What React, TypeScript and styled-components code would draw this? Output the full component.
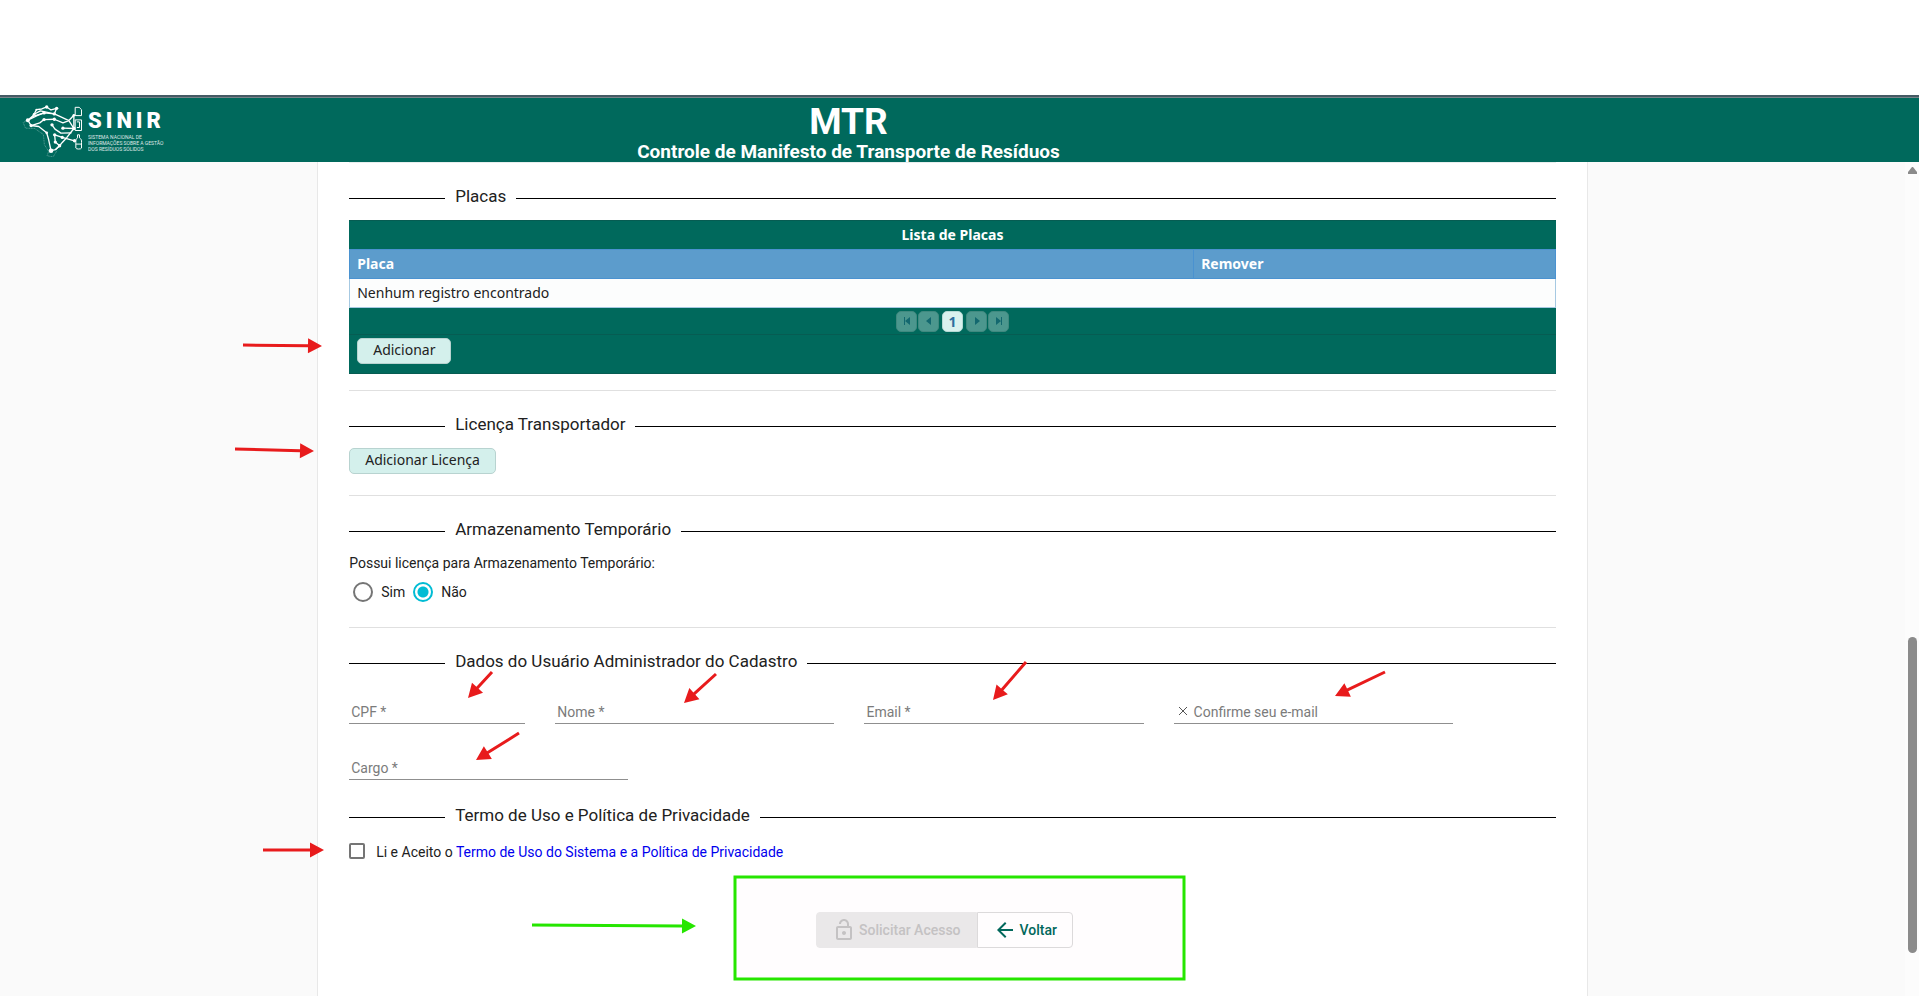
import React from 'react';
import styled, { createGlobalStyle } from 'styled-components';
import { MdArrowBack, MdOutlineLockOpen } from 'react-icons/md';

const GlobalStyle = createGlobalStyle`
  *, *::before, *::after { box-sizing: border-box; }
  body { margin: 0; background: #fff; color: #212121; font: 14px/20px Roboto, "Liberation Sans", sans-serif; }
  h1, h2, p { margin: 0; font-weight: 400; }
  button, input { font: inherit; color: inherit; }
`;

const Page = styled.div`
  position: relative;
  display: flex;
  flex-direction: column;
  min-height: 100vh;
  padding-top: 95px;
`;

const Header = styled.header`
  display: grid;
  grid-template-columns: 190px 1fr 412px;
  height: 67px;
  border-top: 2px solid #455a64;
  background: #00695c;
  box-shadow: inset 0 1px #78848a;
  color: #fff;
`;

const Brand = styled.a`
  display: flex;
  align-items: flex-start;
  gap: 5px;
  padding: 7px 0 0 22px;
  color: #fff;
  text-decoration: none;
`;

const BrandText = styled.span`
  display: flex;
  flex-direction: column;
  padding-top: 6px;
`;

const BrandName = styled.strong`
  margin-bottom: 2px;
  font: 900 22px/22px Roboto, sans-serif;
  letter-spacing: 4px;
`;

const BrandLine = styled.span`
  font: 5px/6px Roboto, sans-serif;
  white-space: nowrap;
  opacity: 0.85;
`;

const Titles = styled.div`
  padding-top: 5px;
  text-align: center;
  white-space: nowrap;
`;

const Title = styled.h1`
  font-size: 37px;
  font-weight: 700;
  line-height: 40px;
`;

const Subtitle = styled.p`
  font-size: 19px;
  font-weight: 700;
  line-height: 20px;
`;

const Body = styled.div`
  flex: 1;
  display: flex;
  background: #fafafa;
`;

const Main = styled.main`
  flex: 1;
  display: flex;
  justify-content: center;
`;

const Card = styled.form`
  width: 66.7%;
  padding: 0 31px;
  border: solid #e8e8e8;
  border-width: 0 1px;
  background: #fff;
`;

const Section = styled.section<{ $end?: number; $line?: boolean }>`
  padding-top: 21px;
  padding-bottom: ${(p) => p.$end ?? 0}px;
  border-bottom: ${(p) => (p.$line ? '1px solid #e0e0e0' : '0')};

  &:first-child { border-top: 1px solid #e8eeee; }
`;

const Heading = styled.h2`
  display: flex;
  align-items: center;
  gap: 10px;
  margin-bottom: 12px;
  font-size: 17px;
  line-height: 24px;
  white-space: nowrap;

  &::before, &::after {
    content: '';
    height: 1px;
    margin-top: 5px;
    background: #000;
  }
  &::before { width: 96px; }
  &::after { flex: 1; }
`;

const tableFont = '"Noto Sans", "Open Sans", sans-serif';

const Panel = styled.div`
  border: 1px solid #065c52;
  border-width: 1px 0;
  background: #00695c;
  font-family: ${tableFont};
`;

const Table = styled.table`
  width: 100%;
  table-layout: fixed;
  border-collapse: collapse;
`;

const Caption = styled.caption`
  height: 28px;
  color: #fff;
  font-weight: 700;
  line-height: 28px;
`;

const HeadCell = styled.th<{ $width: string }>`
  width: ${(p) => p.$width};
  height: 29px;
  padding: 0 7px;
  border: 1px solid #4a92d0;
  background: #5c9ccc;
  color: #fff;
  text-align: left;
`;

const Cell = styled.td`
  height: 29px;
  padding: 0 7px;
  border: 1px solid #a6c9e2;
  background: #fcfdfd;
`;

const Pager = styled.nav`
  display: flex;
  justify-content: center;
  align-items: center;
  gap: 1px;
  height: 26px;
`;

const PageButton = styled.button<{ $current?: boolean }>`
  display: grid;
  place-items: center;
  width: 21px;
  height: 21px;
  margin: 0 ${(p) => (p.$current ? 2 : 0)}px;
  padding: 0;
  border: 1px solid ${(p) => (p.$current ? '#b5d9d4' : '#40897f')};
  border-radius: 5px;
  background: ${(p) => (p.$current ? '#d8f1ee' : '#4c978e')};
  color: ${(p) => (p.$current ? '#2e6e9e' : '#13686f')};
  font-weight: 700;
`;

const PanelFooter = styled.div`
  height: 39px;
  padding: 3px 8px;
  border-top: 1px solid #065c52;
`;

const ActionButton = styled.button`
  display: block;
  height: 26px;
  padding: 0 15px 2px;
  border: 1px solid #b8d3d0;
  border-radius: 5px;
  background: #d4f0ec;
  color: #222;
  font-family: ${tableFont};
  line-height: 20px;
`;

const Radios = styled.div`
  display: flex;
  gap: 8px;
  padding: 9px 0 0 4px;
`;

const RadioLabel = styled.label`
  display: flex;
  align-items: center;
  gap: 8px;
`;

const Radio = styled.input`
  appearance: none;
  width: 20px;
  height: 20px;
  margin: 0;
  border: 2px solid #757575;
  border-radius: 50%;

  &:checked {
    border-color: #00bcd4;
    background: radial-gradient(circle, #00bcd4 5px, transparent 6px);
  }
`;

const Fields = styled.div<{ $columns: string }>`
  display: grid;
  grid-template-columns: ${(p) => p.$columns};
  gap: 30px;
  & + & { margin-top: 17px; }
`;

const FieldBox = styled.label`
  display: flex;
  align-items: center;
  gap: 6px;
  min-width: 0;
  height: 39px;
  padding: 15px 2px 0;
  border-bottom: 1px solid #8f8f8f;
  color: #7b7b7b;
  white-space: nowrap;
`;

const FieldInput = styled.input`
  flex: 1;
  width: 0;
  min-width: 0;
  padding: 0;
  border: 0;
  outline: 0;
  background: transparent;
`;

const Terms = styled.div`
  display: flex;
  align-items: center;
  gap: 11px;
  padding-top: 1px;

  label { padding-top: 2px; }
`;

const Checkbox = styled.input`
  appearance: none;
  width: 16px;
  height: 16px;
  margin: 0;
  border: 2px solid #757575;
  border-radius: 2px;
`;

const TermsLink = styled.a`
  color: #0000ee;
  text-decoration: none;
`;

const Actions = styled.div`
  display: flex;
  justify-content: center;
  padding: 50px 16px 49px 0;
`;

const FormButton = styled.button<{ $side: 'left' | 'right' }>`
  display: flex;
  align-items: center;
  gap: 3px;
  height: 36px;
  padding: 0 15px;
  border: 1px solid ${(p) => (p.$side === 'left' ? '#eaeaea' : '#dcdcdc')};
  border-radius: ${(p) => (p.$side === 'left' ? '4px 0 0 4px' : '0 4px 4px 0')};
  background: ${(p) => (p.$side === 'left' ? '#eaeaea' : '#fff')};
  color: ${(p) => (p.$side === 'left' ? '#c4c4c4' : '#00695c')};
  font-weight: 500;

  svg { width: 24px; height: 24px; }
`;

const ScrollTrack = styled.div`
  display: flex;
  flex-direction: column;
  align-items: center;
  width: 14px;
  padding: 5px 1px 0 2px;
  background: #fcfcfc;

  svg { width: 9px; height: 7px; }
`;

const ScrollSpace = styled.div<{ $grow: number }>`
  flex: ${(p) => p.$grow};
`;

const ScrollThumb = styled.div`
  flex: 316;
  width: 9px;
  border-radius: 5px;
  background: #8b8b8b;
`;

const Overlay = styled.svg`
  position: absolute;
  inset: 0;
  width: 100%;
  height: 100%;
  pointer-events: none;
`;

const nodes: [number, number, number][] = [
  [82, 105, 6], [92, 121, 5], [139, 65, 5], [108, 73, 3], [101, 87, 4], [169, 69, 5], [131, 83, 5],
  [162, 86, 5], [131, 103, 5], [162, 102, 5], [155, 119, 5], [139, 143, 4], [188, 129, 5],
  [221, 130, 5], [221, 90, 4], [186, 157, 5], [163, 149, 5], [223, 167, 5], [165, 171, 5],
  [178, 182, 5], [152, 197, 7],
];

const BrandMap = () => (
  <svg width="61" height="53" viewBox="65 56 183 160" fill="none" stroke="#fff" strokeWidth="4" strokeLinejoin="round" aria-hidden="true">
    <path d="M82 105 95 94 101 87 108 73 124 71 139 65 152 74 169 69 162 86 131 83 110 91 82 105 92 121 115 124 139 143 145 164 152 197 165 194 178 182 186 172 200 157 221 130 221 115 221 90" />
    <path d="M95 94 131 83M131 103 162 102 188 113 206 106 221 130 188 129M155 119 164 132 182 144 214 143M101 87 120 77 162 86 182 95 206 106 221 90M92 121 118 113 131 103M163 149 186 157 223 167M163 149 165 171 178 182 165 194" />
    <path d="m82 105-14 7 7 17 28 1 26 18 3 31 13 20-5 13 18 4 12-19" strokeWidth="2" strokeDasharray="3 2" opacity=".5" />
    <g strokeWidth="3">
      <path d="M225 66h12l7 7v18h-19zM225 104h19v32h-19zM230 110h8v17h-8" />
      <path d="M232 149h6v9c5 4 7 7 6 14v17c0 4-17 4-17 0v-17c-1-7 1-10 5-14zM227 177h16" />
    </g>
    {nodes.map(([x, y, r]) => (
      <circle key={`${x}-${y}`} cx={x} cy={y} r={r} fill="#fff" stroke="none" />
    ))}
  </svg>
);

type ArrowProps = { from: [number, number]; to: [number, number]; color?: string };

/** Straight marker arrow with a solid triangular head at `to`. */
const Arrow = ({ from, to, color = '#e81b1c' }: ArrowProps) => {
  const length = Math.hypot(to[0] - from[0], to[1] - from[1]);
  const angle = (Math.atan2(to[1] - from[1], to[0] - from[0]) * 180) / Math.PI;
  return (
    <g transform={`translate(${from[0]} ${from[1]}) rotate(${angle})`} fill={color}>
      <path d={`M0-1.5H${length - 14}V-7.5L${length} 0 ${length - 14} 7.5V1.5H0z`} />
    </g>
  );
};

const arrows: ArrowProps[] = [
  { from: [243, 345], to: [322, 346] },
  { from: [235, 449], to: [314, 451] },
  { from: [492, 672], to: [468, 698] },
  { from: [716, 674], to: [684, 703] },
  { from: [1026, 662], to: [993, 700] },
  { from: [1385, 672], to: [1335, 696] },
  { from: [519, 733], to: [476, 760] },
  { from: [263, 850], to: [324, 850] },
  { from: [532, 925], to: [696, 926], color: '#26e600' },
];

const pagerIcons = {
  first: 'M2 1h1v8H2zM8 1v8L3 5z',
  prev: 'M7 1v8L2 5z',
  next: 'M3 1v8l5-4z',
  last: 'M7 1h1v8H7zM2 1v8l5-4z',
};

const PagerStep = ({ kind, label }: { kind: keyof typeof pagerIcons; label: string }) => (
  <PageButton type="button" aria-label={label}>
    <svg width="10" height="10" viewBox="0 0 10 10" fill="currentColor">
      <path d={pagerIcons[kind]} />
    </svg>
  </PageButton>
);

const Field = ({ id, label, icon }: { id: string; label: string; icon?: React.ReactNode }) => (
  <FieldBox htmlFor={id}>
    {icon}
    <span>{label}</span>
    <FieldInput id={id} type="text" />
  </FieldBox>
);

export default function App() {
  return (
    <Page>
      <GlobalStyle />
      <Header>
        <Brand href="#" aria-label="SINIR">
          <BrandMap />
          <BrandText>
            <BrandName>SINIR</BrandName>
            <BrandLine>SISTEMA NACIONAL DE</BrandLine>
            <BrandLine>INFORMAÇÕES SOBRE A GESTÃO</BrandLine>
            <BrandLine>DOS RESÍDUOS SÓLIDOS</BrandLine>
          </BrandText>
        </Brand>
        <Titles>
          <Title>MTR</Title>
          <Subtitle>Controle de Manifesto de Transporte de Resíduos</Subtitle>
        </Titles>
      </Header>

      <Body>
        <Main>
          <Card>
            <Section $end={16} $line>
              <Heading>Placas</Heading>
              <Panel>
                <Table>
                  <Caption>Lista de Placas</Caption>
                  <thead>
                    <tr>
                      <HeadCell $width="70%">Placa</HeadCell>
                      <HeadCell $width="30%">Remover</HeadCell>
                    </tr>
                  </thead>
                  <tbody>
                    <tr>
                      <Cell colSpan={2}>Nenhum registro encontrado</Cell>
                    </tr>
                  </tbody>
                </Table>
                <Pager aria-label="Paginação">
                  <PagerStep kind="first" label="Primeira" />
                  <PagerStep kind="prev" label="Anterior" />
                  <PageButton type="button" $current>1</PageButton>
                  <PagerStep kind="next" label="Próxima" />
                  <PagerStep kind="last" label="Última" />
                </Pager>
                <PanelFooter>
                  <ActionButton type="button">Adicionar</ActionButton>
                </PanelFooter>
              </Panel>
            </Section>

            <Section $end={21} $line>
              <Heading>Licença Transportador</Heading>
              <ActionButton type="button">Adicionar Licença</ActionButton>
            </Section>

            <Section $end={25} $line>
              <Heading>Armazenamento Temporário</Heading>
              <p id="storage">Possui licença para Armazenamento Temporário:</p>
              <Radios role="radiogroup" aria-labelledby="storage">
                <RadioLabel>
                  <Radio type="radio" name="storage" />
                  Sim
                </RadioLabel>
                <RadioLabel>
                  <Radio type="radio" name="storage" defaultChecked />
                  Não
                </RadioLabel>
              </Radios>
            </Section>

            <Section $end={2}>
              <Heading>Dados do Usuário Administrador do Cadastro</Heading>
              <Fields $columns="176fr 279fr 279fr 279fr 73fr">
                <Field id="cpf" label="CPF *" />
                <Field id="name" label="Nome *" />
                <Field id="email" label="Email *" />
                <Field
                  id="confirm"
                  label="Confirme seu e-mail"
                  icon={
                    <svg width="12" height="12" viewBox="0 0 12 12" stroke="#555" aria-hidden="true">
                      <path d="m3 1 8 8M11 1l-8 8" />
                    </svg>
                  }
                />
              </Fields>
              <Fields $columns="279fr 898fr">
                <Field id="role" label="Cargo *" />
              </Fields>
            </Section>

            <Section>
              <Heading>Termo de Uso e Política de Privacidade</Heading>
              <Terms>
                <Checkbox id="terms" type="checkbox" />
                <label htmlFor="terms">
                  Li e Aceito o <TermsLink href="#">Termo de Uso do Sistema e a Política de Privacidade</TermsLink>
                </label>
              </Terms>
            </Section>

            <Actions>
              <FormButton type="button" $side="left" disabled>
                <MdOutlineLockOpen />
                Solicitar Acesso
              </FormButton>
              <FormButton type="button" $side="right">
                <MdArrowBack />
                Voltar
              </FormButton>
            </Actions>
          </Card>
        </Main>
        <ScrollTrack aria-hidden="true">
          <svg viewBox="0 0 9 7" fill="#8b8b8b">
            <path d="M4 0h1l4 5v2H0V5z" />
          </svg>
          <ScrollSpace $grow={463} />
          <ScrollThumb />
          <ScrollSpace $grow={44} />
        </ScrollTrack>
      </Body>

      <Overlay aria-hidden="true">
        <rect x="735" y="877" width="449" height="102" fill="#ff0040" fillOpacity=".008" stroke="#26e600" strokeWidth="3" />
        {arrows.map((arrow) => (
          <Arrow key={arrow.from.join()} {...arrow} />
        ))}
      </Overlay>
    </Page>
  );
}
